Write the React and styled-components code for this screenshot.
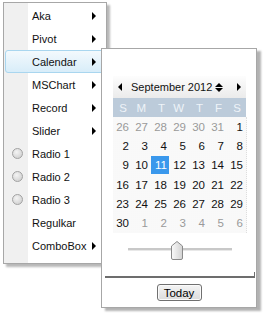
import React from 'react'
import styled, { createGlobalStyle } from 'styled-components'

const GlobalStyle = createGlobalStyle`
	html, body {
		margin: 0;
		padding: 0;
		background: #fff;
	}
	body {
		font-family: "Liberation Sans", Arial, sans-serif;
		font-size: 11px;
		color: #111;
	}
`

const PageX = styled.div`
	position: relative;
	width: 265px;
	height: 313px;
	overflow: hidden;
	padding: 2px 0 0 3px;
	box-sizing: border-box;
`

const MenuX = styled.ul`
	list-style: none;
	margin: 0;
	padding: 1px 0 6px;
	width: 104px;
	box-sizing: border-box;
	border: 1px solid #a7a7a7;
	background: linear-gradient(to right, #f0f0f0 0, #f0f0f0 24px, #fff 24px);
	box-shadow: 3px 3px 2px rgba(0, 0, 0, 0.28);
`

const ItemX = styled.li`
	height: 23px;
	display: flex;
	align-items: center;
	box-sizing: border-box;
	margin-left: 1px;
	border: 1px solid ${props => props.active ? '#a9d6ef' : 'transparent'};
	border-radius: 3px;
	background: ${props => props.active ? 'linear-gradient(#f3f9fd, #d8edf9)' : 'none'};
`

const GutterX = styled.span`
	flex: 0 0 22px;
	display: flex;
	justify-content: center;
	align-items: center;
`

const RadioX = styled.span`
	width: 11px;
	height: 11px;
	box-sizing: border-box;
	border-radius: 50%;
	border: 1px solid #a2a2a2;
	background: radial-gradient(circle at 40% 35%, #f4f4f4, #c9c9c9);
`

const LabelX = styled.span`
	flex: 1;
	padding-left: 4px;
	white-space: nowrap;
	font-size: 11px;
`

const ArrowX = styled.span`
	width: 0;
	height: 0;
	margin-right: ${props => props.left ? 0 : 9}px;
	border-top: 4px solid transparent;
	border-bottom: 4px solid transparent;
	border-${props => props.left ? 'right' : 'left'}: 4px solid #000;
`

const PopupX = styled.div`
	position: absolute;
	left: 101px;
	top: 48px;
	width: 156px;
	height: 260px;
	box-sizing: border-box;
	border: 1px solid #a7a7a7;
	background: #fff;
	box-shadow: 4px 3px 2px rgba(0, 0, 0, 0.3);
	display: flex;
	flex-direction: column;
	align-items: stretch;
	padding: 27px 0 0;
`

const CalendarX = styled.div`
	width: 133px;
	margin-left: 11px;
`

const HeadX = styled.div`
	height: 22px;
	display: flex;
	align-items: center;
	padding: 0 0 0 5px;
	background: linear-gradient(#fdfdfd, #ebebeb);
	font-size: 11px;
	white-space: nowrap;
	${ArrowX}:last-child {
		margin-right: 5px;
	}
`

const MonthX = styled.span`
	margin-left: 9px;
	color: #111;
`

const SpinX = styled.span`
	display: flex;
	flex-direction: column;
	gap: 1px;
	margin-left: 3px;
	&::before, &::after {
		content: '';
		width: 0;
		height: 0;
		border-left: 4px solid transparent;
		border-right: 4px solid transparent;
	}
	&::before { border-bottom: 4px solid #000; }
	&::after { border-top: 4px solid #000; }
`

const SpacerX = styled.span`
	flex: 1;
`

const WeekX = styled.div`
	display: grid;
	grid-template-columns: repeat(7, 19px);
	height: 19px;
	align-items: center;
	background: #bccbda;
	color: #eef3f8;
`

const DaysX = styled.div`
	display: grid;
	grid-template-columns: repeat(7, 19px);
	grid-auto-rows: 19.3px;
	align-items: center;
	background-color: #fff;
	background-image: radial-gradient(#f1f1f1 0.6px, transparent 0.8px);
	background-size: 2px 2px;
	border-right: 1px dotted #dedede;
	margin-right: -1px;
`

const CellX = styled.span`
	text-align: right;
	padding-right: 2px;
	line-height: 18px;
	height: 18px;
	margin: 0 1px 0 0;
	color: ${props => props.selected ? '#fff' : props.other ? '#9a9a9a' : '#111'};
	background: ${props => props.selected ? '#3a98ec' : 'none'};
	font-size: 11.5px;
`

const WeekCellX = styled(CellX)`
	color: #eef3f8;
	padding-right: 4px;
`

const SliderX = styled.div`
	position: relative;
	height: 18px;
	margin: 8px 0 0 15px;
	width: 104px;
	display: flex;
	align-items: center;
`

const TrackX = styled.div`
	width: 100%;
	height: 2px;
	background: #c8c8c8;
	border-bottom: 1px solid #e8e8e8;
`

const ThumbX = styled.svg`
	position: absolute;
	left: 43px;
	top: 0;
`

const FooterX = styled.div`
	margin-top: auto;
	display: flex;
	flex-direction: column;
	align-items: center;
	padding-bottom: 6px;
`

const RuleX = styled.div`
	align-self: stretch;
	margin: 0 1px 0 3px;
	height: 4px;
	border-bottom: 2px solid #6d6d6d;
	border-right: 1px solid #6d6d6d;
`

const ButtonX = styled.button`
	margin-top: 6px;
	width: 45px;
	height: 17px;
	padding: 0;
	font-family: "Liberation Sans", Arial, sans-serif;
	font-size: 11.5px;
	color: #000;
	border: 1px solid #707070;
	border-radius: 3px;
	background: linear-gradient(#f4f4f4, #dcdcdc);
	box-shadow: inset 0 0 0 1px #fbfbfb;
`

const items = [
	{ label: 'Aka', sub: true },
	{ label: 'Pivot', sub: true },
	{ label: 'Calendar', sub: true, active: true },
	{ label: 'MSChart', sub: true },
	{ label: 'Record', sub: true },
	{ label: 'Slider', sub: true },
	{ label: 'Radio 1', radio: true },
	{ label: 'Radio 2', radio: true },
	{ label: 'Radio 3', radio: true },
	{ label: 'Regulkar' },
	{ label: 'ComboBox', sub: true }
]

const weekDays = ['S', 'M', 'T', 'W', 'T', 'F', 'S']

const days = [
	[26, 1], [27, 1], [28, 1], [29, 1], [30, 1], [31, 1], [1],
	[2], [3], [4], [5], [6], [7], [8],
	[9], [10], [11, 0, 1], [12], [13], [14], [15],
	[16], [17], [18], [19], [20], [21], [22],
	[23], [24], [25], [26], [27], [28], [29],
	[30], [1, 1], [2, 1], [3, 1], [4, 1], [5, 1], [6, 1]
]

const App = () => (
	<PageX>
		<GlobalStyle />
		<MenuX>
			{items.map( item => (
				<ItemX key={item.label} active={item.active}>
					<GutterX>{item.radio && <RadioX />}</GutterX>
					<LabelX>{item.label}</LabelX>
					{item.sub && <ArrowX />}
				</ItemX>
			) )}
		</MenuX>

		<PopupX>
			<CalendarX>
				<HeadX>
					<ArrowX left />
					<MonthX>September 2012</MonthX>
					<SpinX />
					<SpacerX />
					<ArrowX />
				</HeadX>
				<WeekX>
					{weekDays.map( ( d, i ) => <WeekCellX key={i}>{d}</WeekCellX> )}
				</WeekX>
				<DaysX>
					{days.map( ( [n, other, selected], i ) => (
						<CellX key={i} other={other} selected={selected}>{n}</CellX>
					) )}
				</DaysX>
				<SliderX>
					<TrackX />
					<ThumbX width="12" height="19" viewBox="0 0 12 19">
						<defs>
							<linearGradient id="thumb" x1="0" x2="1" y1="0" y2="0">
								<stop offset="0" stopColor="#fafafa" />
								<stop offset="1" stopColor="#d2d2d2" />
							</linearGradient>
						</defs>
						<path d="M6 0.5 L11.5 5 V17 Q11.5 18.5 10 18.5 H2 Q0.5 18.5 0.5 17 V5 Z" fill="url(#thumb)" stroke="#8a8a8a" />
					</ThumbX>
				</SliderX>
			</CalendarX>
			<FooterX>
				<RuleX />
				<ButtonX>Today</ButtonX>
			</FooterX>
		</PopupX>
	</PageX>
)

export default App
